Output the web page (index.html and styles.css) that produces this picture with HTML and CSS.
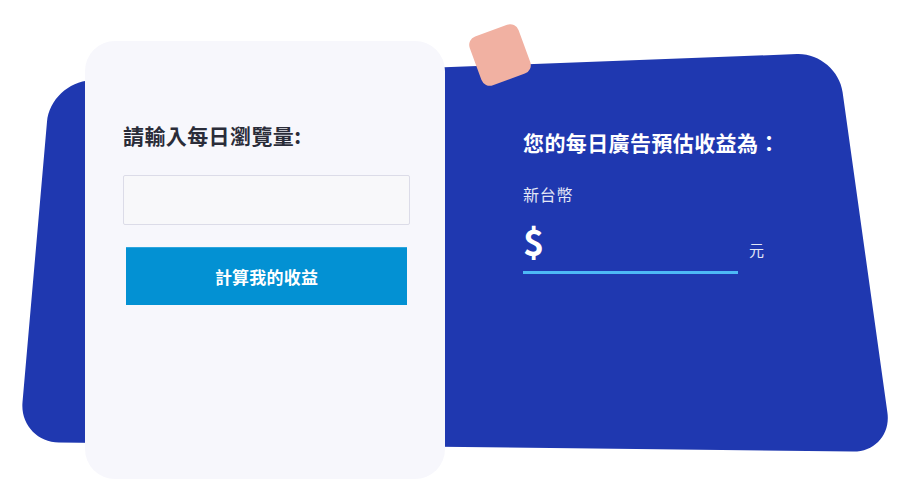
FILE: index.html
```html
<!DOCTYPE html>
<html lang="zh-Hant">
<head>
<meta charset="utf-8">
<title>廣告收益試算</title>
<link rel="stylesheet" href="styles.css">
</head>
<body>
<div class="stage">
  <svg class="blob" width="900" height="491" viewBox="0 0 900 491" aria-hidden="true">
    <path d="M90.5 80.5 L797 54.1 C819 53.3 839.5 70.4 842.6 92.2 L887.4 412.4 C890.5 434.2 875 451.8 853 451.5 L59 442.5 C37 442.2 20.6 424.1 22.5 402.2 L47 121.8 C48.9 99.9 68.5 81.3 90.5 80.5 Z" fill="#1f38b0"/>
  </svg>
  <div class="tape"></div>

  <section class="card">
    <h2 class="card-title">請輸入每日瀏覽量:</h2>
    <input class="views-input" type="text" aria-label="每日瀏覽量">
    <button class="calc-btn" type="button">計算我的收益</button>
  </section>

  <section class="result">
    <h2 class="result-title">您的每日廣告預估收益為：</h2>
    <div class="currency">新台幣</div>
    <div class="amount-row">
      <div class="amount">$</div>
      <span class="unit">元</span>
    </div>
  </section>
</div>
</body>
</html>
```

FILE: styles.css
```css
html, body {
  margin: 0;
  padding: 0;
  background: #ffffff;
}

body {
  font-family: "Noto Sans CJK TC", "Noto Sans", sans-serif;
}

.stage {
  position: relative;
  width: 900px;
  height: 491px;
  overflow: hidden;
  box-sizing: border-box;
  padding: 41px 0 0 85px;
  display: flex;
  align-items: flex-start;
}

.blob {
  position: absolute;
  left: 0;
  top: 0;
  z-index: 0;
}

.tape {
  position: absolute;
  left: 474px;
  top: 29px;
  width: 52px;
  height: 52px;
  border-radius: 9px;
  background: #f1b1a2;
  transform: rotate(-20deg);
  z-index: 1;
}

.card {
  position: relative;
  z-index: 2;
  width: 360px;
  height: 438px;
  box-sizing: border-box;
  padding: 80px 35px 0 38px;
  background: #f7f7fc;
  border-radius: 30px;
  display: flex;
  flex-direction: column;
}

.card-title {
  margin: 0;
  font-size: 21px;
  line-height: 28px;
  font-weight: 700;
  letter-spacing: 0.4px;
  color: #2a2c39;
}

.views-input {
  margin-top: 26px;
  width: 287px;
  height: 50px;
  box-sizing: border-box;
  border: 1px solid #dcdce8;
  border-radius: 2px;
  background: #f8f8fa;
  font: inherit;
  padding: 0 12px;
}

.calc-btn {
  margin: 22px 0 0 3px;
  width: 281px;
  height: 58px;
  border: 0;
  border-top: 1px solid #2ea6de;
  background: #0391d3;
  color: #ffffff;
  font-family: "Noto Sans CJK TC", sans-serif;
  font-size: 17px;
  font-weight: 700;
  letter-spacing: 0.2px;
  padding: 0;
}

.result {
  position: relative;
  z-index: 2;
  margin-left: 78px;
  padding-top: 87px;
  color: #ffffff;
}

.result-title {
  margin: 0;
  font-size: 21px;
  line-height: 28px;
  font-weight: 700;
  letter-spacing: 0.4px;
}

.currency {
  margin-top: 26px;
  font-size: 16px;
  line-height: 24px;
  letter-spacing: 0.7px;
  color: #e3e7f6;
}

.amount-row {
  margin-top: 14px;
  display: flex;
  align-items: baseline;
  gap: 11px;
}

.amount {
  width: 215px;
  box-sizing: border-box;
  border-bottom: 3px solid #4db9f6;
  padding-bottom: 11px;
  font-family: "Noto Sans CJK TC", sans-serif;
  font-size: 36px;
  line-height: 40px;
  font-weight: 700;
}

.unit {
  font-size: 15px;
  color: #e3e7f6;
}
```
